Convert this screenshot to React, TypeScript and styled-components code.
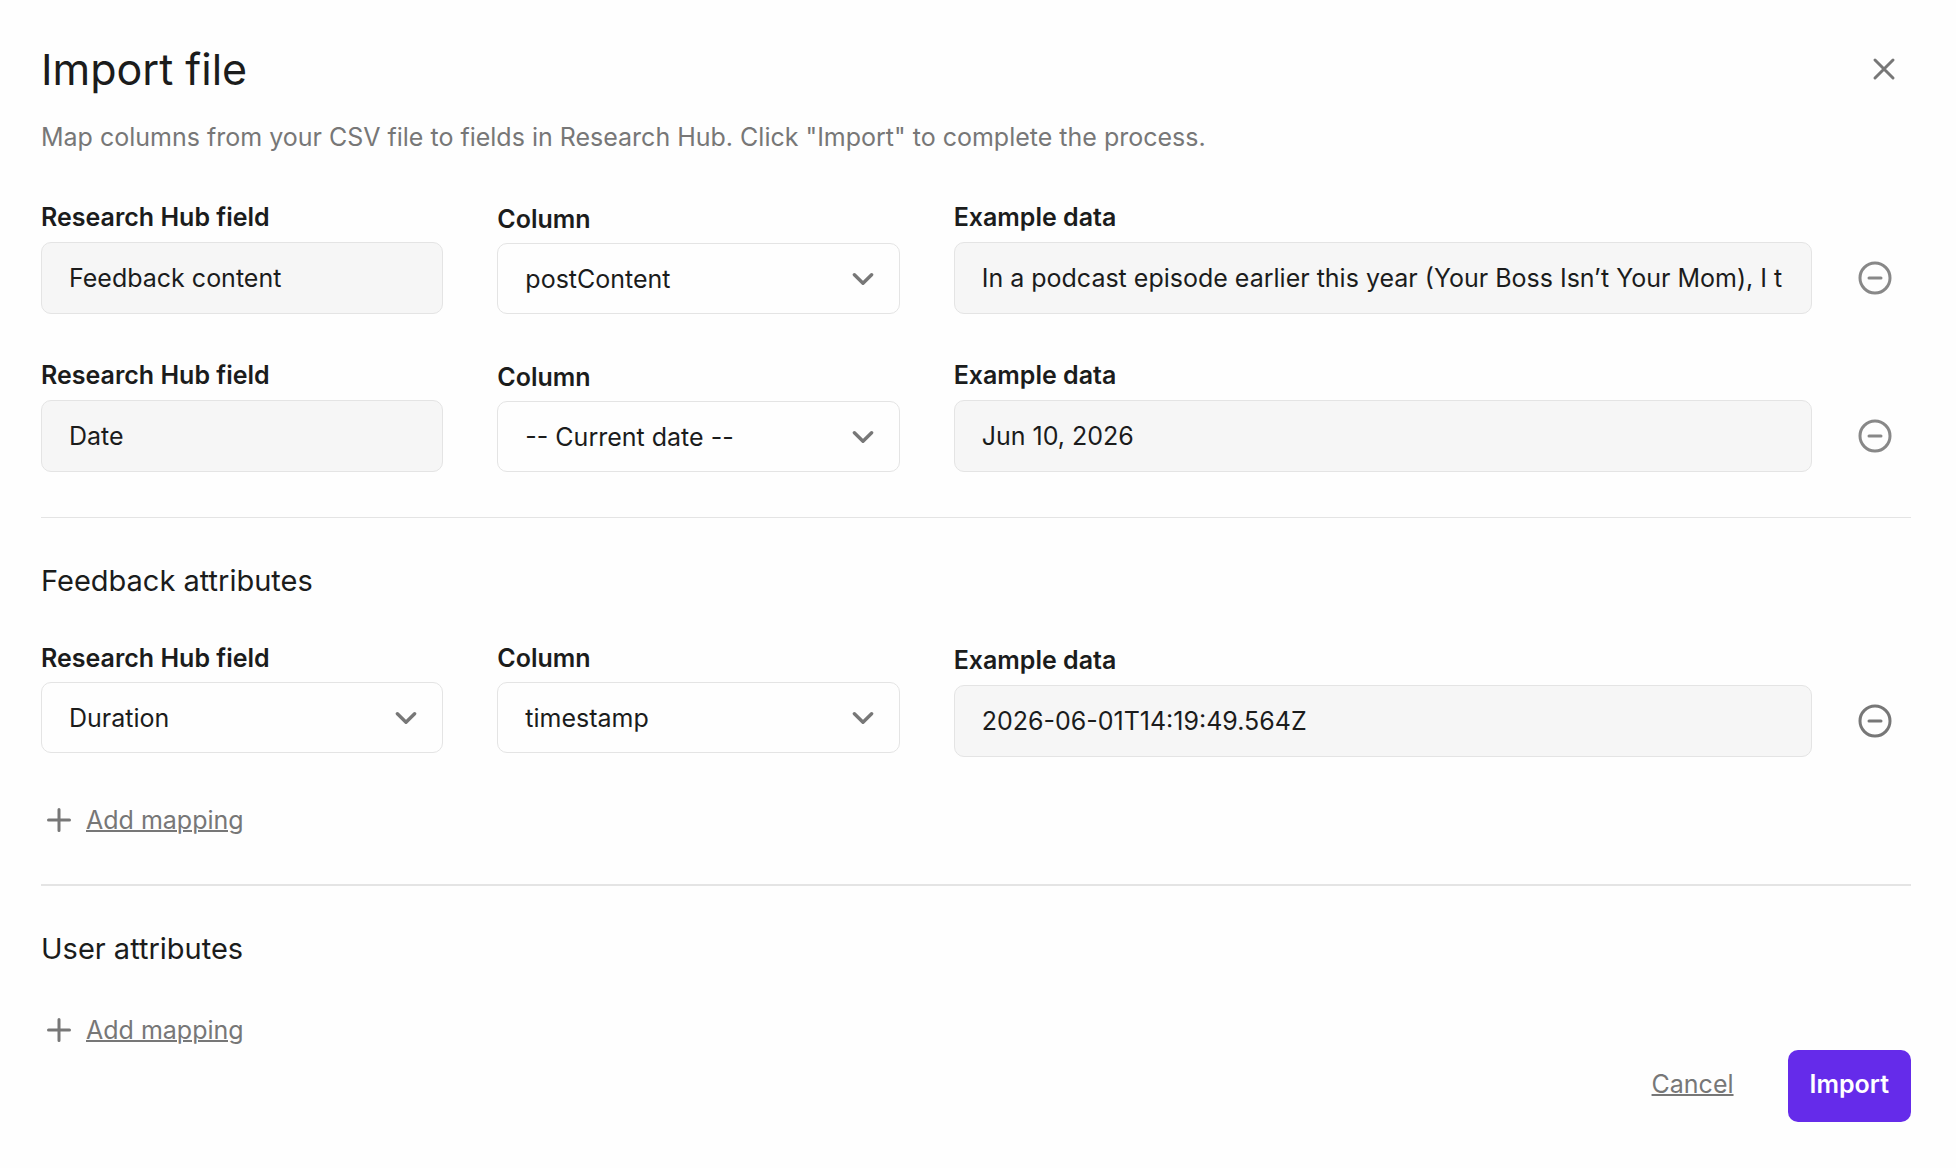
import React, { useId } from "react";
import styled, { createGlobalStyle } from "styled-components";

const color = {
  page: "#fefefe",
  ink: "#1b1c1c",
  muted: "#777777",
  line: "#e4e4e4",
  field: "#f6f6f6",
  accent: "#652bea",
};

const GlobalStyle = createGlobalStyle`
  *, *::before, *::after { box-sizing: border-box; }
  body {
    margin: 0;
    background: ${color.page};
    color: ${color.ink};
    font-family: Inter, "Liberation Sans", sans-serif;
    font-size: 25px;
    line-height: 32px;
  }
  button, input, select { font: inherit; color: inherit; }
`;

const Dialog = styled.main`
  padding: 41px 45px 46px 41px;
`;

const Header = styled.header`
  display: flex;
  justify-content: space-between;
  align-items: flex-start;
`;

const Title = styled.h1`
  margin: 0;
  font-size: 43px;
  line-height: 56px;
  font-weight: 400;
`;

const Description = styled.p`
  margin: 24px 0 0;
  color: ${color.muted};
`;

const IconButton = styled.button<{ $height: number; $width: number; $faded?: boolean }>`
  display: grid;
  place-items: center;
  flex: none;
  width: ${(p) => p.$width}px;
  height: ${(p) => p.$height}px;
  padding: 0;
  border: 0;
  background: none;
  color: ${(p) => (p.$faded ? "#888888" : color.muted)};
  cursor: pointer;
`;

const Section = styled.section<{ $top: number; $bottom: number; $line: number }>`
  display: flex;
  flex-direction: column;
  gap: 44px;
  padding: ${(p) => p.$top}px 0 ${(p) => p.$bottom}px;
  border-bottom: ${(p) => p.$line}px solid ${color.line};
`;

const SectionTitle = styled.h2`
  margin: 0;
  font-size: 29px;
  line-height: 36px;
  font-weight: 400;
`;

const Row = styled.div`
  display: flex;
  align-items: flex-end;
  gap: 27px;
`;

const Fields = styled.div<{ $align: "start" | "end" }>`
  flex: 1;
  min-width: 0;
  display: grid;
  grid-template-columns: minmax(0, 15fr) minmax(0, 15fr) minmax(0, 32fr);
  column-gap: 54px;
  align-items: ${(p) => p.$align};
`;

const Field = styled.div`
  display: flex;
  flex-direction: column;
  gap: 8px;
`;

const Label = styled.label<{ $line: number }>`
  font-weight: 600;
  line-height: ${(p) => p.$line}px;
`;

const TextBox = styled.input`
  width: 100%;
  height: 72px;
  padding: 0 25px 0 27px;
  border: 1px solid ${color.line};
  border-radius: 10px;
  background: ${color.field};
  outline: none;
`;

const SelectWrap = styled.div`
  display: grid;
  align-items: center;

  > * { grid-area: 1 / 1; }
  > svg {
    justify-self: end;
    margin-right: 26px;
    color: ${color.muted};
    pointer-events: none;
  }
`;

const SelectBox = styled.select`
  appearance: none;
  width: 100%;
  height: 71px;
  padding: 0 60px 0 27px;
  border: 1px solid ${color.line};
  border-radius: 10px;
  background: ${color.page};
`;

const LinkButton = styled.button`
  display: inline-flex;
  align-items: center;
  gap: 15px;
  padding: 0;
  border: 0;
  background: none;
  color: ${color.muted};
  cursor: pointer;
`;

const AddButton = styled(LinkButton)`
  align-self: flex-start;
  margin: 3px 0 0 6px;
`;

const Underlined = styled.span`
  text-decoration: underline;
  text-decoration-thickness: 2px;
`;

const Footer = styled.footer`
  display: flex;
  justify-content: flex-end;
  gap: 54px;
  margin-top: 4px;
`;

const CancelButton = styled(LinkButton)`
  height: 72px;
  padding-bottom: 4px;
`;

const PrimaryButton = styled.button`
  height: 72px;
  padding: 0 22px 4px;
  border: 0;
  border-radius: 10px;
  background: ${color.accent};
  color: #ffffff;
  font-weight: 600;
  cursor: pointer;
`;

const stroke = {
  fill: "none",
  stroke: "currentColor",
  strokeWidth: 3,
  strokeLinecap: "round" as const,
  strokeLinejoin: "round" as const,
  "aria-hidden": true,
};

const CloseIcon = () => (
  <svg width="24" height="24" viewBox="0 0 24 24" {...stroke}>
    <path d="M3 3l18 18M21 3l-18 18" />
  </svg>
);

const PlusIcon = () => (
  <svg width="24" height="24" viewBox="0 0 24 24" {...stroke}>
    <path d="M12 1.5v21M1.5 12h21" />
  </svg>
);

const MinusCircleIcon = () => (
  <svg width="34" height="34" viewBox="0 0 34 34" {...stroke}>
    <circle cx="17" cy="17" r="15" />
    <path d="M11 17h12" />
  </svg>
);

const ChevronIcon = () => (
  <svg width="22" height="14" viewBox="0 0 22 14" {...stroke} strokeWidth={3.4}>
    <path d="M2.4 2.8l8.6 8.4 8.6-8.4" />
  </svg>
);

function ReadOnlyField({ label, value }: { label: string; value: string }) {
  const id = useId();
  return (
    <Field>
      <Label htmlFor={id} $line={34}>{label}</Label>
      <TextBox id={id} value={value} readOnly />
    </Field>
  );
}

function SelectField({ label, value }: { label: string; value: string }) {
  const id = useId();
  return (
    <Field>
      <Label htmlFor={id} $line={31}>{label}</Label>
      <SelectWrap>
        <SelectBox id={id} defaultValue={value}>
          <option>{value}</option>
        </SelectBox>
        <ChevronIcon />
      </SelectWrap>
    </Field>
  );
}

type Mapping = { field: string; column: string; example: string; editable?: boolean };

function MappingRow({ field, column, example, editable }: Mapping) {
  const FirstField = editable ? SelectField : ReadOnlyField;
  return (
    <Row>
      <Fields $align={editable ? "start" : "end"}>
        <FirstField label="Research Hub field" value={field} />
        <SelectField label="Column" value={column} />
        <ReadOnlyField label="Example data" value={example} />
      </Fields>
      <IconButton $width={72} $height={72} $faded={!editable} aria-label="Remove mapping">
        <MinusCircleIcon />
      </IconButton>
    </Row>
  );
}

const AddMapping = () => (
  <AddButton type="button">
    <PlusIcon />
    <Underlined>Add mapping</Underlined>
  </AddButton>
);

export default function App() {
  return (
    <>
      <GlobalStyle />
      <Dialog>
        <Header>
          <div>
            <Title>Import file</Title>
            <Description>
              Map columns from your CSV file to fields in Research Hub. Click "Import" to complete the process.
            </Description>
          </div>
          <IconButton $width={54} $height={56} aria-label="Close">
            <CloseIcon />
          </IconButton>
        </Header>

        <Section $top={47} $bottom={45} $line={1}>
          <MappingRow
            field="Feedback content"
            column="postContent"
            example="In a podcast episode earlier this year (Your Boss Isn’t Your Mom), I t"
          />
          <MappingRow field="Date" column="-- Current date --" example="Jun 10, 2026" />
        </Section>

        <Section $top={45} $bottom={48} $line={2}>
          <SectionTitle>Feedback attributes</SectionTitle>
          <MappingRow editable field="Duration" column="timestamp" example="2026-06-01T14:19:49.564Z" />
          <AddMapping />
        </Section>

        <Section $top={45} $bottom={0} $line={0}>
          <SectionTitle>User attributes</SectionTitle>
          <AddMapping />
        </Section>

        <Footer>
          <CancelButton type="button">
            <Underlined>Cancel</Underlined>
          </CancelButton>
          <PrimaryButton type="button">Import</PrimaryButton>
        </Footer>
      </Dialog>
    </>
  );
}
